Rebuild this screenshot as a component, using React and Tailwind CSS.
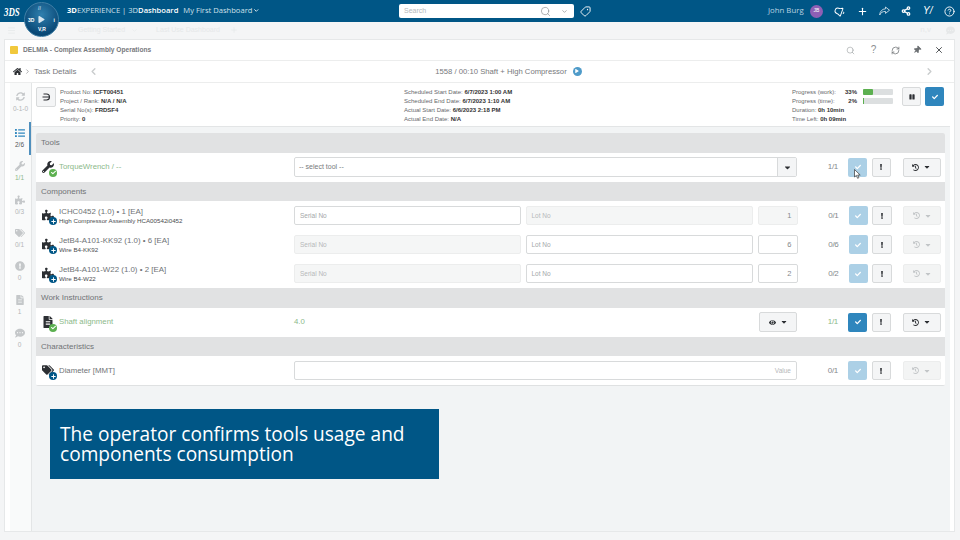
import { Search, ChevronDown, Tag, Plus, Share2, CircleHelp, RefreshCw, X, ChevronLeft, ChevronRight, Menu, Bell } from 'lucide-react';
import { FaHome, FaWrench, FaPuzzlePiece, FaTags, FaExclamationCircle, FaFileAlt, FaCommentDots, FaSyncAlt, FaList, FaCheck, FaHistory, FaCaretDown, FaEye, FaPause, FaExclamation, FaPlay, FaPlus, FaThumbtack } from 'react-icons/fa';

const railItems = [
    { icon: FaList, label: '2/6', active: true },
    { icon: FaWrench, label: '1/1', green: true },
    { icon: FaPuzzlePiece, label: '0/3' },
    { icon: FaTags, label: '0/1' },
    { icon: FaExclamationCircle, label: '0' },
    { icon: FaFileAlt, label: '1' },
    { icon: FaCommentDots, label: '0' },
];

const Info = ({ label, value }) => (
    <div className="h-[9px] leading-[9px] whitespace-nowrap">
        {label} <b className="text-[#333]">{value}</b>
    </div>
);

const SectionHeader = ({ title }) => (
    <div className="h-[19.5px] bg-[#e1e2e3] pl-[5px] text-[8px] leading-[20px] text-[#707376]">{title}</div>
);

// badge in the lower right corner of a row icon
const RowIcon = ({ icon: Icon, done }) => (
    <div className="relative ml-[6px] mr-[4px] h-[19px] w-[13px] shrink-0">
        <Icon className="mt-[3px] text-[12px] text-[#2c2f33]" />
        {done ? (
            <span className="absolute -right-[2px] bottom-0 flex h-[8px] w-[8px] items-center justify-center rounded-full bg-[#5cb050] text-[5px] text-white"><FaCheck /></span>
        ) : (
            <span className="absolute -right-[2px] bottom-0 flex h-[8px] w-[8px] items-center justify-center rounded-full bg-[#005686] text-[5px] text-white"><FaPlus /></span>
        )}
    </div>
);

const TextBox = ({ text, disabled, className, right }) => (
    <div className={`h-[19px] rounded-[2px] border px-[5px] text-[6.5px] leading-[17px] ${right ? 'text-right' : ''} ${disabled ? 'border-[#eceded] bg-[#f5f6f6] text-[#b5b8ba]' : 'border-[#d8dadb] bg-white text-[#a4a7a9]'} ${className}`}>
        {text}
    </div>
);

const Actions = ({ count, done, countGreen, historyOn }) => (
    <>
        <div className={`w-[41px] shrink-0 text-right text-[8px] tracking-[-0.3px] ${countGreen ? 'text-[#8cb98a]' : 'text-[#85898c]'}`}>{count}</div>
        <div className={`ml-[10px] flex h-[19px] w-[19px] shrink-0 items-center justify-center rounded-[2px] text-[6px] text-white ${done ? 'bg-[#2f86bd]' : 'bg-[#acd0e6]'}`}>
            <FaCheck />
        </div>
        <div className="ml-[4.5px] flex h-[19px] w-[19.5px] shrink-0 items-center justify-center rounded-[2px] border border-[#d8dadb] bg-[#f4f5f6] text-[6px] text-[#2c2f33]">
            <FaExclamation />
        </div>
        <div className={`ml-[11.5px] flex h-[19px] w-[38px] shrink-0 items-center justify-center gap-[4px] rounded-[2px] border text-[7px] ${historyOn ? 'border-[#d8dadb] bg-[#f4f5f6] text-[#2c2f33]' : 'border-[#eceded] bg-[#f3f4f4] text-[#c2c5c7]'}`}>
            <FaHistory />
            <FaCaretDown className="text-[8px]" />
        </div>
    </>
);

const ComponentRow = ({ name, sub, serialOff, lotOff, qty, count }) => (
    <div className="flex h-[29px] items-center bg-white">
        <RowIcon icon={FaPuzzlePiece} />
        <div className="w-[235px] shrink-0">
            <div className="text-[7.9px] leading-[11px] text-[#707376]">{name}</div>
            <div className="text-[6.2px] leading-[8px] text-[#4a4d50]">{sub}</div>
        </div>
        <TextBox text="Serial No" disabled={serialOff} className="w-[227px]" />
        <TextBox text="Lot No" disabled={lotOff} className="ml-[4.5px] w-[227.5px]" />
        <TextBox text={qty} right disabled={qty === '1'} className="ml-[4.5px] w-[40px] !text-[7.5px] !text-[#85898c]" />
        <Actions count={count} />
    </div>
);

export default function App() {
    return (
        <div className="relative flex h-[540px] w-[960px] flex-col overflow-hidden bg-[#f4f5f6] font-['Liberation_Sans',sans-serif]">
            {/* top bar */}
            <header className="flex h-[22px] shrink-0 items-center bg-[#005686] text-white">
                <span className="ml-[4px] w-[63px] origin-left scale-x-[0.68] font-['Liberation_Serif',serif] text-[13px] font-bold italic leading-none">3DS</span>
                <div className="flex w-[193px] shrink-0 items-center whitespace-nowrap font-['Open_Sans',sans-serif] text-[7.6px] text-[#cfe0ea]">
                    <span>
                        <b className="text-white">3D</b>EXPERIENCE | 3D<span className="font-semibold text-white">Dashboard</span>
                    </span>
                    <span className="ml-[5px]">My First Dashboard</span>
                    <ChevronDown size={9} strokeWidth={3} className="ml-[1px] text-white" />
                </div>
                <div className="ml-[139px] flex h-[14.5px] w-[175px] shrink-0 items-center rounded-[2px] bg-white pl-[5px] text-[7px] text-[#b4b8bb]">
                    <span className="flex-1">Search</span>
                    <Search size={11} strokeWidth={1.2} className="text-[#77797b]" />
                    <ChevronDown size={7} className="ml-[10px] mr-[6px] text-[#77797b]" />
                </div>
                <Tag size={11} className="ml-[6px] shrink-0 rotate-90" />
                <span className="ml-[177px] w-[35px] shrink-0 whitespace-nowrap font-['Open_Sans',sans-serif] text-[7.8px] text-[#b9d2e0]">John Burg</span>
                <span className="ml-[7px] flex h-[13px] w-[13px] shrink-0 items-center justify-center rounded-full bg-[#8e5fb5] text-[5px] text-white">JB</span>
                <Bell size={11} className="ml-[11px] shrink-0 -rotate-[70deg]" />
                <Plus size={11} strokeWidth={2.4} className="ml-[12px] shrink-0" />
                <svg className="ml-[11px] shrink-0" width="11" height="10" viewBox="0 0 11 10">
                    <path d="M6.5 1 L10.5 4.2 L6.5 7.4 L6.5 5.4 C3.5 5.4 1.8 6.6 0.7 9 C0.9 5.4 3 3 6.5 2.8 Z" fill="none" stroke="#cfe0ea" strokeWidth="0.9" />
                </svg>
                <Share2 size={10} strokeWidth={3} className="ml-[11px] shrink-0" />
                <span className="ml-[12px] w-[10px] shrink-0 text-[10px] italic leading-none">Y/</span>
                <CircleHelp size={11} className="ml-[11px] shrink-0" />
            </header>

            {/* compass */}
            <div className="absolute left-[24px] top-[2px] flex h-[35px] w-[35px] items-center justify-center rounded-full border border-[#3f7fa6] bg-[radial-gradient(circle_at_50%_35%,#2f7fae,#0a4a78_70%,#073a60)] text-[5px] font-bold text-white">
                <span className="absolute left-[3px] top-[14px]">3D</span>
                <span className="absolute right-[3px] top-[14px]">i</span>
                <span className="absolute left-[13px] top-[2px] text-[#b5d0e0]">//</span>
                <span className="absolute bottom-[3px] left-[13px]">V,R</span>
                <FaPlay className="text-[7px] text-[#d5e5ef]" />
            </div>

            {/* dashboard tab bar */}
            <div className="flex h-[16px] shrink-0 items-center pl-[7px] text-[7px] text-[#e6e8e9]">
                <Menu size={9} />
                <span className="ml-[62px]">Getting Started</span>
                <ChevronDown size={7} className="ml-[6px]" />
                <span className="ml-[18px]">Last Use Dashboard</span>
                <Plus size={8} className="ml-[10px]" />
                <span className="ml-auto text-[8px]">n,v</span>
                <FaCommentDots className="ml-[15px] mr-[5px] text-[9px]" />
            </div>

            {/* widget */}
            <div className="ml-[4px] mt-[1px] flex h-[493px] w-[951px] shrink-0 flex-col border border-[#e6e8e9] bg-white">
                <div className="flex h-[21px] shrink-0 items-center border-b border-[#eceded] pl-[5px] text-[#77797c]">
                    <span className="h-[8px] w-[8px] rounded-[1px] bg-[#f1c83c]" />
                    <span className="ml-[5px] flex-1 text-[6.6px] font-bold">DELMIA - Complex Assembly Operations</span>
                    <Search size={9} strokeWidth={1.4} className="text-[#8b8f92]" />
                    <span className="ml-[14px] w-[9px] text-center text-[10px] leading-none text-[#8b8f92]">?</span>
                    <RefreshCw size={9} className="ml-[13px] text-[#6b6f72]" />
                    <FaThumbtack className="ml-[13px] rotate-45 text-[8px] text-[#6b6f72]" />
                    <X size={10} strokeWidth={2.4} className="ml-[13px] mr-[10px] text-[#55585b]" />
                </div>

                <div className="flex h-[22px] shrink-0 items-center border-b border-[#eceded] pl-[8px] text-[#77797c]">
                    <FaHome className="text-[9px] text-[#2c2f33]" />
                    <ChevronRight size={7} className="ml-[2px]" />
                    <span className="ml-[3px] w-[54px] text-[7.9px]">Task Details</span>
                    <ChevronLeft size={11} strokeWidth={3} className="text-[#c9cccd]" />
                    <div className="flex flex-1 items-center justify-center pr-[6px] text-[7.7px]">
                        1558 / 00:10 Shaft + High Compressor
                        <span className="ml-[6px] flex h-[9px] w-[9px] items-center justify-center rounded-full bg-[#4f9bc9] text-[4px] text-white"><FaPlay /></span>
                    </div>
                    <ChevronRight size={11} strokeWidth={3} className="mr-[19px] text-[#c9cccd]" />
                </div>

                <div className="flex flex-1 pl-[5px] pr-[4px]">
                    {/* left rail */}
                    <nav className="w-[21px] shrink-0 bg-[#f9fafa] text-center text-[6.5px] text-[#b3b6b8]">
                        <div className="flex h-[39px] flex-col items-center pt-[9px]">
                            <FaSyncAlt className="text-[9px] text-[#c4c7c9]" />
                            <span className="mt-[3px]">0-1-0</span>
                        </div>
                        {railItems.map((item) => (
                            <div key={item.label + item.icon.name} className={`flex h-[33.4px] flex-col items-center justify-center border-r-2 ${item.active ? 'border-[#4f8fbd] text-[#55585b]' : 'border-transparent'} ${item.green ? 'text-[#8cb98a]' : ''}`}>
                                <item.icon className={`mb-[2px] text-[10px] ${item.active ? 'text-[#2f86bd]' : 'text-[#c4c7c9]'}`} />
                                {item.label}
                            </div>
                        ))}
                    </nav>

                    <div className="flex flex-1 flex-col">
                        {/* task info */}
                        <div className="flex h-[44px] shrink-0 border-b border-l border-[#e3e5e6] bg-white pl-[4px] pt-[4px] text-[6px] text-[#66696c]">
                            <div className="flex h-[20px] w-[20px] items-center justify-center rounded-[2px] border border-[#d8dadb] bg-[#f4f5f6]">
                                <svg width="10" height="10" viewBox="0 0 10 10" fill="none" stroke="#2c2f33" strokeWidth="1.1">
                                    <path d="M2.5 2 H5.5 A3 3 0 0 1 5.5 8 H2.5 M1.5 5 H8" />
                                </svg>
                            </div>
                            <div className="ml-[4px] w-[344px] pt-[0.5px]">
                                <Info label="Product No:" value="ICFT00451" />
                                <Info label="Project / Rank:" value="N/A / N/A" />
                                <Info label="Serial No(s):" value="FRDSF4" />
                                <Info label="Priority:" value="0" />
                            </div>
                            <div className="w-[388px] pt-[0.5px]">
                                <Info label="Scheduled Start Date:" value="6/7/2023 1:00 AM" />
                                <Info label="Scheduled End Date:" value="6/7/2023 1:10 AM" />
                                <Info label="Actual Start Date:" value="6/6/2023 2:18 PM" />
                                <Info label="Actual End Date:" value="N/A" />
                            </div>
                            <div className="w-[110px] pt-[0.5px]">
                                <div className="flex h-[9px] items-center leading-[9px]">
                                    <span className="w-[49px]">Progress (work):</span>
                                    <b className="w-[16px] text-right text-[#333]">33%</b>
                                    <span className="ml-[6px] h-[6px] w-[30px] rounded-[1px] bg-[#dcdfe0]"><span className="block h-full w-[10px] rounded-[1px] bg-[#5cb050]" /></span>
                                </div>
                                <div className="flex h-[9px] items-center leading-[9px]">
                                    <span className="w-[49px]">Progress (time):</span>
                                    <b className="w-[16px] text-right text-[#333]">2%</b>
                                    <span className="ml-[6px] h-[6px] w-[30px] rounded-[1px] bg-[#dcdfe0]"><span className="block h-full w-[1px] bg-[#5cb050]" /></span>
                                </div>
                                <Info label="Duration:" value="0h 10min" />
                                <Info label="Time Left:" value="0h 09min" />
                            </div>
                            <div className="flex h-[19px] w-[19px] items-center justify-center rounded-[2px] border border-[#d8dadb] bg-[#f4f5f6] text-[6px] text-[#2c2f33]"><FaPause /></div>
                            <div className="ml-[4px] flex h-[19px] w-[19px] items-center justify-center rounded-[2px] bg-[#2f86bd] text-[6px] text-white"><FaCheck /></div>
                        </div>

                        {/* task content */}
                        <div className="flex-1 border-l border-[#e3e5e6] bg-[#f2f4f5] pl-[4px] pr-[5px] pt-[6px]">
                            <div className="overflow-hidden rounded-[2px] border-b border-[#dfe1e2] bg-white">
                                <SectionHeader title="Tools" />
                                <div className="flex h-[29px] items-center bg-white">
                                    <RowIcon icon={FaWrench} done />
                                    <div className="w-[235px] shrink-0 text-[7.8px] text-[#8cb98a]">TorqueWrench / --</div>
                                    <div className="flex h-[19.5px] w-[503px] shrink-0 rounded-[2px] border border-[#d8dadb] text-[7px] leading-[17px] text-[#77797c]">
                                        <span className="flex-1 pl-[4px]">-- select tool --</span>
                                        <span className="flex w-[19px] items-center justify-center border-l border-[#d8dadb] bg-[#f4f5f6] text-[9px] text-[#2c2f33]"><FaCaretDown /></span>
                                    </div>
                                    <Actions count="1/1" historyOn />
                                </div>

                                <SectionHeader title="Components" />
                                <ComponentRow name="ICHC0452 (1.0) • 1 [EA]" sub="High Compressor Assembly HCA00542i0452" lotOff qty="1" count="0/1" />
                                <ComponentRow name="JetB4-A101-KK92 (1.0) • 6 [EA]" sub="Wire B4-KK92" serialOff qty="6" count="0/6" />
                                <ComponentRow name="JetB4-A101-W22 (1.0) • 2 [EA]" sub="Wire B4-W22" serialOff qty="2" count="0/2" />

                                <SectionHeader title="Work Instructions" />
                                <div className="flex h-[29px] items-center bg-white">
                                    <RowIcon icon={FaFileAlt} done />
                                    <div className="w-[235px] shrink-0 text-[7.8px] text-[#8cb98a]">Shaft alignment</div>
                                    <div className="flex w-[503px] shrink-0 items-center justify-between">
                                        <span className="text-[7.8px] text-[#8cb98a]">4.0</span>
                                        <div className="flex h-[19.5px] w-[38px] items-center justify-center gap-[4px] rounded-[2px] border border-[#d8dadb] bg-[#f4f5f6] text-[7px] text-[#2c2f33]">
                                            <FaEye />
                                            <FaCaretDown className="text-[8px]" />
                                        </div>
                                    </div>
                                    <Actions count="1/1" done countGreen historyOn />
                                </div>

                                <SectionHeader title="Characteristics" />
                                <div className="flex h-[29px] items-center bg-white">
                                    <RowIcon icon={FaTags} />
                                    <div className="w-[235px] shrink-0 text-[7.8px] text-[#707376]">Diameter [MMT]</div>
                                    <TextBox text="Value" right className="w-[503px] !text-[#b5b8ba]" />
                                    <Actions count="0/1" />
                                </div>
                            </div>

                            {/* caption */}
                            <div className="ml-[14px] mt-[23px] h-[70px] w-[389px] bg-[#005686] pl-[10px] pt-[15px] font-['Open_Sans',sans-serif] text-[19.1px] leading-[20px] text-white">
                                The operator confirms tools usage and
                                <br />
                                components consumption
                            </div>
                        </div>
                    </div>
                </div>
            </div>

            {/* mouse cursor */}
            <svg className="absolute left-[854px] top-[169px]" width="7" height="10" viewBox="0 0 7 10">
                <path d="M0.5 0.5 L0.5 8 L2.4 6.4 L3.6 9.3 L4.9 8.7 L3.7 6 L6.2 6 Z" fill="#fff" stroke="#333" strokeWidth="0.7" />
            </svg>
        </div>
    );
}
